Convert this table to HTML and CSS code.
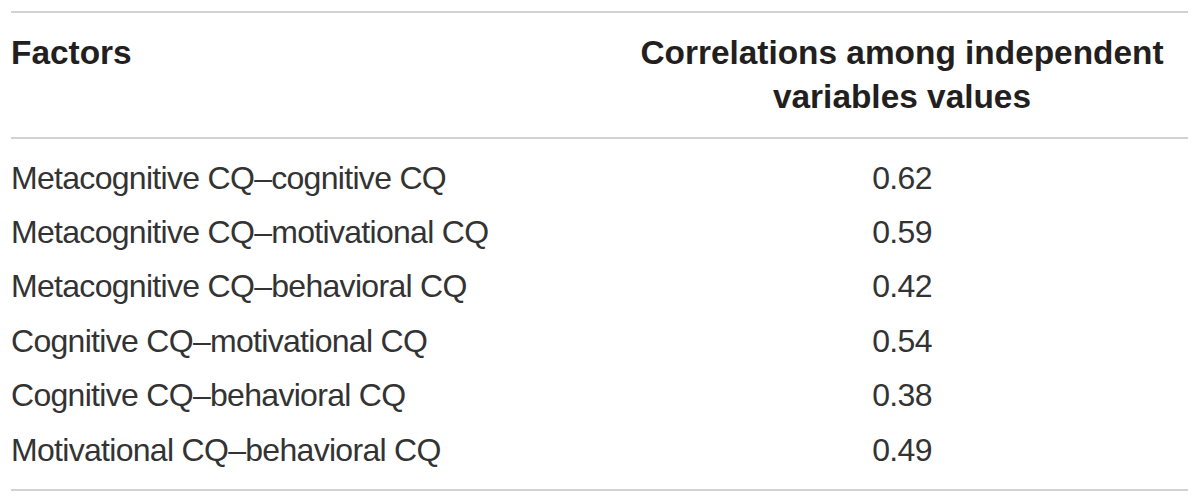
FILE: index.html
```html
<!DOCTYPE html>
<html>
<head>
<meta charset="utf-8">
<link rel="stylesheet" href="styles.css">
</head>
<body>
<div class="table">
  <div class="head">
    <div class="c1">Factors</div>
    <div class="c2">Correlations among independent<br>variables values</div>
  </div>
  <div class="tbody">
    <div class="row"><div class="c1">Metacognitive CQ–cognitive CQ</div><div class="c2">0.62</div></div>
    <div class="row"><div class="c1">Metacognitive CQ–motivational CQ</div><div class="c2">0.59</div></div>
    <div class="row"><div class="c1">Metacognitive CQ–behavioral CQ</div><div class="c2">0.42</div></div>
    <div class="row"><div class="c1">Cognitive CQ–motivational CQ</div><div class="c2">0.54</div></div>
    <div class="row"><div class="c1">Cognitive CQ–behavioral CQ</div><div class="c2">0.38</div></div>
    <div class="row"><div class="c1">Motivational CQ–behavioral CQ</div><div class="c2">0.49</div></div>
  </div>
</div>
</body>
</html>
```
FILE: styles.css
```css
html, body {
  margin: 0;
  padding: 0;
  background: #ffffff;
}
body {
  font-family: "Liberation Sans", Arial, sans-serif;
  color: #231f20;
}
.table {
  margin: 11px 0 0 11px;
  width: 1177px;
  border-top: 2px solid #d2d2d2;
  border-bottom: 2px solid #d2d2d2;
}
.head {
  display: grid;
  grid-template-columns: 605px 1fr;
  padding: 18px 0 18px;
  border-bottom: 2px solid #d2d2d2;
  font-weight: bold;
  font-size: 33.4px;
  line-height: 44px;
}
.head .c2 {
  text-align: center;
}
.tbody {
  padding: 11.7px 0 11.9px;
  font-size: 32px;
  letter-spacing: -0.7px;
  color: #333333;
}
.row {
  display: grid;
  grid-template-columns: 605px 1fr;
  height: 54.4px;
  line-height: 54.4px;
}
.row .c2 {
  text-align: center;
}
```
